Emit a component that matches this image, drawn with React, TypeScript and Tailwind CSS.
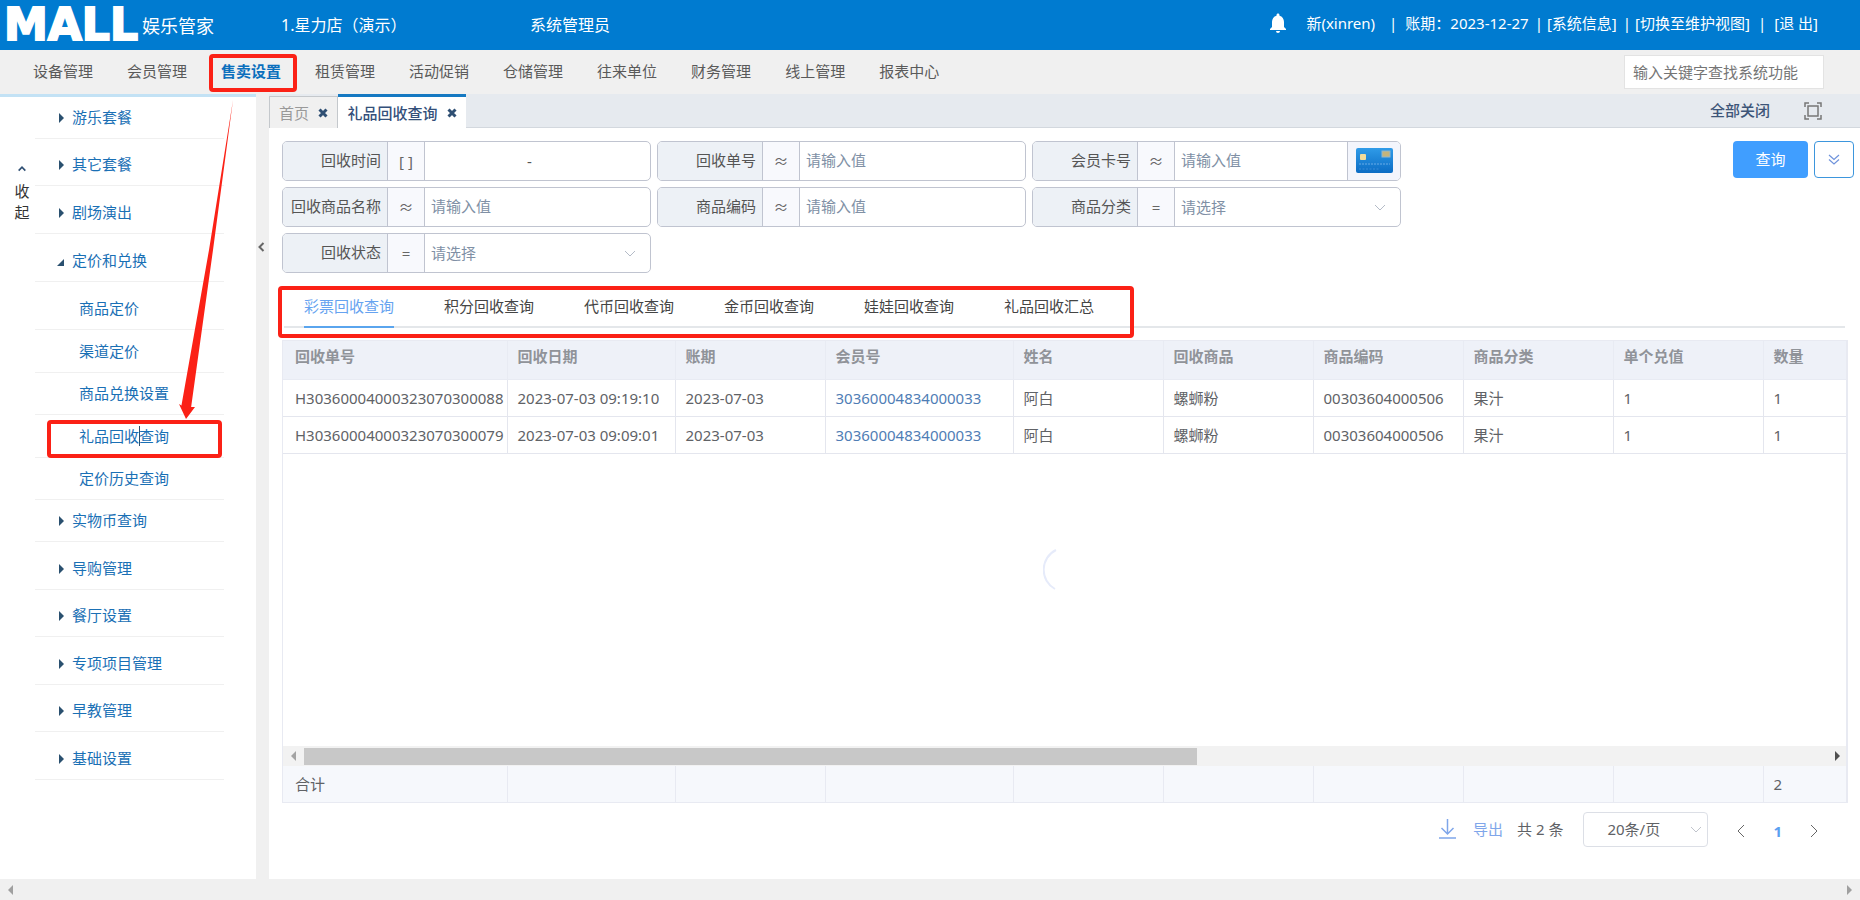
import { useState } from "react";
import type { ReactNode } from "react";
import { MdNotifications } from "react-icons/md";

const topMenus = [
  "设备管理",
  "会员管理",
  "售卖设置",
  "租赁管理",
  "活动促销",
  "仓储管理",
  "往来单位",
  "财务管理",
  "线上管理",
  "报表中心",
];

const upperMenus = ["游乐套餐", "其它套餐", "剧场演出"];
const pricingMenus = ["商品定价", "渠道定价", "商品兑换设置", "礼品回收查询", "定价历史查询"];
const lowerMenus = ["导购管理", "餐厅设置", "专项项目管理", "早教管理", "基础设置"];

const queryTabs = [
  "彩票回收查询",
  "积分回收查询",
  "代币回收查询",
  "金币回收查询",
  "娃娃回收查询",
  "礼品回收汇总",
];

const columns = [
  "回收单号",
  "回收日期",
  "账期",
  "会员号",
  "姓名",
  "回收商品",
  "商品编码",
  "商品分类",
  "单个兑值",
  "数量",
];

const rows = [
  ["H30360004000323070300088", "2023-07-03 09:19:10", "2023-07-03", "30360004834000033", "阿白", "螺蛳粉", "00303604000506", "果汁", "1", "1"],
  ["H30360004000323070300079", "2023-07-03 09:09:01", "2023-07-03", "30360004834000033", "阿白", "螺蛳粉", "00303604000506", "果汁", "1", "1"],
];

// Header, body and summary tables share the same column widths
function TableCols() {
  return (
    <colgroup>
      <col className="w-[224px]" />
      <col className="w-[168px]" />
      <col className="w-[150px]" />
      <col className="w-[188px]" />
      <col className="w-[150px]" />
      <col className="w-[150px]" />
      <col className="w-[150px]" />
      <col className="w-[150px]" />
      <col className="w-[150px]" />
      <col />
    </colgroup>
  );
}

function Triangle({ className, d = "M0 0 L5 5 L0 10 Z" }: { className: string; d?: string }) {
  return (
    <svg viewBox="0 0 5 10" className={`w-[5px] h-[10px] ${className}`} fill="currentColor">
      <path d={d} />
    </svg>
  );
}

function Chevron({ className, d = "M1 1 L6 6 L11 1" }: { className: string; d?: string }) {
  return (
    <svg viewBox="0 0 12 7" className={`w-3 h-[7px] ${className}`} fill="none" stroke="currentColor">
      <path d={d} />
    </svg>
  );
}

function CloseIcon() {
  return (
    <svg viewBox="0 0 10 10" className="w-[10px] h-[10px] text-[#2f4f73]" stroke="currentColor" strokeWidth="3">
      <path d="M1.5 1.5 L8.5 8.5 M8.5 1.5 L1.5 8.5" />
    </svg>
  );
}

function CardIcon() {
  return (
    <svg viewBox="0 0 37 25" className="w-[37px] h-[25px]">
      <defs>
        <linearGradient id="card" x1="0" y1="0" x2="0" y2="1">
          <stop offset="0" stopColor="#2f9be8" />
          <stop offset="1" stopColor="#0b6cc4" />
        </linearGradient>
      </defs>
      <rect width="37" height="25" rx="2" fill="url(#card)" />
      <rect x="4" y="6" width="6" height="6" rx="1" fill="#f3dc9a" />
      <rect x="26" y="3" width="8" height="6" fill="#c4b47c" stroke="#8fb7d0" />
      <path d="M3 16 H34" stroke="#4d9ce0" strokeWidth="1.5" strokeDasharray="2 1" />
      <path d="M3 21 H24" stroke="#3a8dd8" strokeDasharray="2 1.5" />
    </svg>
  );
}

function Filter({ id, label, op, children }: { id: string; label: string; op: string; children: ReactNode }) {
  return (
    <div className="flex h-10 border border-[#c0c4d0] rounded-[5px] overflow-hidden bg-white">
      <label htmlFor={id} className="w-[105px] shrink-0 pr-[6px] pb-[2px] flex items-center justify-end bg-[#edf1f6] border-r border-[#c0c4d0] text-[#555] whitespace-nowrap">
        {label}
      </label>
      <span className="w-[37px] shrink-0 flex items-center justify-center bg-[#f8f9fd] border-r border-[#c0c4d0] text-[#666]">
        {op}
      </span>
      {children}
    </div>
  );
}

const inputClass = "flex-1 min-w-0 px-[6px] pb-[2px] outline-none placeholder:text-[#8090a5]";

function FilterSelect({ id }: { id: string }) {
  return (
    <div className="relative flex-1 flex">
      <select id={id} className="flex-1 appearance-none pl-[6px] pb-px text-[#8090a5] outline-none">
        <option>请选择</option>
      </select>
      <Chevron className="absolute right-[14px] top-4 text-[#b4bbc7] pointer-events-none" />
    </div>
  );
}

function SideItem({ label, open = false, className }: { label: string; open?: boolean; className: string }) {
  return (
    <li className={`flex items-end border-b border-[#f0f0f0] ${className}`}>
      <a href="#" className="flex items-center gap-2 pl-6 pb-[11px] leading-5 text-[#1a70b5]">
        {open ? (
          <svg viewBox="0 0 7 7" className="w-[7px] h-[7px] -ml-[2px] mt-1 text-[#2a506f]" fill="currentColor">
            <path d="M7 0 V7 H0 Z" />
          </svg>
        ) : (
          <Triangle className="text-[#2a506f] mt-[2px]" />
        )}
        {label}
      </a>
    </li>
  );
}

function Sidebar() {
  return (
    <aside className="relative w-64 shrink-0 flex border-t-3 border-[#c3e2f5] bg-white">
      <button className="w-[35px] pl-[9px] pt-[68px] self-start flex flex-col items-center leading-[21px] text-[#333]">
        <Chevron className="text-[#2f4f73] stroke-2 w-[10px] mb-[9px]" d="M2 6 L6 2 L10 6" />
        <span>收</span>
        <span>起</span>
      </button>
      <ul className="w-[189px]">
        {upperMenus.map((label) => (
          <SideItem key={label} label={label} className={label === "游乐套餐" ? "h-[42px]" : "h-12 even:h-[47px]"} />
        ))}
        <SideItem label="定价和兑换" open className="h-12" />
        <li>
          <ul>
            {pricingMenus.map((label) => (
              <li
                key={label}
                className={`flex items-end border-b border-[#f0f0f0] ${label === "商品定价" ? "h-12" : "h-[42px] even:h-[43px]"}`}
              >
                <a href="#" className="relative ml-11 mb-[11px] leading-5 text-[#1a70b5]">
                  {label}
                  {label === "礼品回收查询" && (
                    <>
                      <i className="absolute left-[60px] top-0 h-5 w-px bg-[#2a506f]" />
                      <i className="absolute -left-8 -top-[6px] w-[175px] h-[38px] border-4 border-[#fb2116] rounded" />
                    </>
                  )}
                </a>
              </li>
            ))}
          </ul>
        </li>
        <SideItem label="实物币查询" className="h-[42px]" />
        {lowerMenus.map((label) => (
          <SideItem key={label} label={label} className="odd:h-12 even:h-[47px]" />
        ))}
      </ul>
      {/* guide arrow from the top menu down to the sub menu */}
      <svg viewBox="0 0 60 320" className="absolute left-[178px] top-[3px] w-[60px] h-[320px] pointer-events-none" fill="#fb2116">
        <path d="M55 0 L35 150 L13 308 L3 308 L31 150 Z" />
        <path d="M1 304 L6 307 L17 307 L8 319 Z" />
      </svg>
    </aside>
  );
}

function Header() {
  return (
    <header className="h-[50px] shrink-0 flex items-center bg-[#007bd0] text-white">
      <span className="w-[142px] shrink-0 pl-1 font-['DejaVu_Sans',sans-serif] font-bold text-[44px] leading-[50px] [-webkit-text-stroke:2px_white]">MALL</span>
      <span className="w-[139px] shrink-0 text-lg leading-6 pt-[2px]">娱乐管家</span>
      <span className="w-[249px] shrink-0 text-base">1.星力店（演示）</span>
      <span className="flex-1 text-base">系统管理员</span>
      <div className="flex items-center pr-[42px] pb-1 whitespace-nowrap">
        <MdNotifications className="size-6 mr-4" />
        <span>新(xinren)</span>
        <span className="ml-[14px] mr-2">|</span>
        <span>账期：2023-12-27</span>
        <span className="ml-[6px] mr-1">|</span>
        <a href="#">[系统信息]</a>
        <span className="ml-[6px] mr-1">|</span>
        <a href="#">[切换至维护视图]</a>
        <span className="ml-2 mr-2">|</span>
        <a href="#">[退 出]</a>
      </div>
    </header>
  );
}

export default function App() {
  const [activeTab, setActiveTab] = useState(queryTabs[0]);

  return (
    <div className="min-h-screen flex flex-col bg-white text-[15px] leading-5 text-[#606266] font-['Noto_Sans','Noto_Sans_CJK_SC',sans-serif]">
      <Header />
      <nav className="h-11 shrink-0 flex items-center bg-[#f0f0f0] pl-[33px] pr-9">
        <div className="flex-1 flex gap-[34px] pb-[2px]">
          {topMenus.map((label) =>
            label === "售卖设置" ? (
              <a key={label} href="#" className="relative font-bold text-[#0b6fbd]">
                {label}
                <i className="absolute -left-3 -top-[7px] w-[88px] h-[38px] border-4 border-[#fb2116] rounded" />
              </a>
            ) : (
              <a key={label} href="#" className="text-[#5a5a5a]">{label}</a>
            )
          )}
        </div>
        <input
          aria-label="输入关键字查找系统功能"
          placeholder="输入关键字查找系统功能"
          className="w-[200px] h-[34px] px-2 bg-white border border-[#e3e3e3] outline-none placeholder:text-[#757575]"
        />
      </nav>

      <div className="flex-1 flex">
        <Sidebar />
        <div className="w-[13px] shrink-0 bg-[#f0f0f0] pt-[148px]">
          <button aria-label="收起侧栏" className="block ml-[2px]">
            <svg viewBox="0 0 7 10" className="w-[7px] h-[10px]" fill="none" stroke="#666" strokeWidth="2">
              <path d="M5.5 1 L1.5 5 L5.5 9" />
            </svg>
          </button>
        </div>

        <main className="flex-1 min-w-0 flex flex-col">
          <div className="h-[34px] shrink-0 flex items-end bg-[#e6eaef] border-b border-[#d3d8de]">
            <button className="h-8 w-[69px] -mb-px flex items-center justify-center gap-[9px] bg-[#f0f0f0] border border-b-0 border-[#c4c8cc] text-[#999]">
              首页 <CloseIcon />
            </button>
            <button className="h-[34px] w-32 -mb-px flex items-center justify-center gap-[9px] bg-white border-t-3 border-[#1579c2] text-[#34507a] font-medium">
              礼品回收查询 <CloseIcon />
            </button>
            <div className="flex-1" />
            <button className="self-center mr-[34px] pb-[2px] font-medium text-[#3d5578]">全部关闭</button>
            <button aria-label="全屏" className="self-center mr-[38px]">
              <svg viewBox="0 0 18 18" className="size-[18px]" fill="none" stroke="#777" strokeWidth="1.5">
                <path d="M1 5 V1 H5 M13 1 H17 V5 M17 13 V17 H13 M5 17 H1 V13" />
                <rect x="4" y="4" width="10" height="10" />
              </svg>
            </button>
          </div>

          <div className="flex justify-between items-start pl-[13px] pr-[6px] pt-[13px]">
            <div className="flex-1 max-w-[1119px] grid grid-cols-3 gap-[6px]">
              <Filter id="time" label="回收时间" op="[ ]">
                <input id="time" className="flex-1 min-w-0 outline-none" />
                <span className="self-center text-[#555]">-</span>
                <input aria-label="结束时间" className="flex-1 min-w-0 outline-none mr-4" />
              </Filter>
              <Filter id="order" label="回收单号" op="≈">
                <input id="order" placeholder="请输入值" className={inputClass} />
              </Filter>
              <Filter id="card-no" label="会员卡号" op="≈">
                <input id="card-no" placeholder="请输入值" className={inputClass} />
                <button aria-label="读卡" className="w-[53px] pb-[2px] flex items-center justify-center bg-[#f3f5fc] border-l border-[#c0c4d0]">
                  <CardIcon />
                </button>
              </Filter>
              <Filter id="goods" label="回收商品名称" op="≈">
                <input id="goods" placeholder="请输入值" className={inputClass} />
              </Filter>
              <Filter id="code" label="商品编码" op="≈">
                <input id="code" placeholder="请输入值" className={inputClass} />
              </Filter>
              <Filter id="category" label="商品分类" op="=">
                <FilterSelect id="category" />
              </Filter>
              <Filter id="status" label="回收状态" op="=">
                <FilterSelect id="status" />
              </Filter>
            </div>
            <div className="flex gap-[6px]">
              <button className="w-[75px] h-[37px] pb-[2px] rounded bg-[#409eff] text-white">查询</button>
              <button aria-label="展开" className="w-10 h-[37px] flex items-center justify-center rounded border border-[#3d96dd] bg-white">
                <svg viewBox="0 0 12 11" className="w-3 h-[11px]" fill="none" stroke="#6f93dc" strokeWidth="1.2">
                  <path d="M1 1 L6 5.5 L11 1 M1 5.5 L6 10 L11 5.5" />
                </svg>
              </button>
            </div>
          </div>

          <div className="relative ml-[15px] mr-[15px] mt-[22px] h-[33px] pl-5 flex gap-[50px] border-b-2 border-[#e4e7ea]">
            {queryTabs.map((label) => (
              <button
                key={label}
                onClick={() => setActiveTab(label)}
                className={`h-[33px] pb-[9px] border-b-2 ${
                  activeTab === label ? "border-[#5aa5ee] text-[#66a3f0]" : "border-transparent text-[#444]"
                }`}
              >
                {label}
              </button>
            ))}
            <i className="absolute -left-[6px] -top-[9px] w-[856px] h-[52px] border-4 border-[#fb2116] rounded pointer-events-none" />
          </div>

          <div className="flex-1 flex flex-col ml-[13px] mr-3 mt-3 border border-r-2 border-[#e8eaf2]">
            <table className="w-full table-fixed border-collapse">
              <TableCols />
              <thead>
                <tr className="h-[38px] bg-[#eef1f8]">
                  {columns.map((name) => (
                    <th key={name} className="pl-[10px] first:pl-3 pb-[7px] text-left font-bold text-[#909399] border-r border-b border-[#e8ebf3] last:border-r-0">
                      {name}
                    </th>
                  ))}
                </tr>
              </thead>
              <tbody>
                {rows.map((row) => (
                  <tr key={row[0]} className="h-[37px]">
                    {row.map((value, i) => (
                      <td key={i} className="pl-[10px] first:pl-3 overflow-hidden whitespace-nowrap border-r border-b border-[#e4e6ee] last:border-r-0">
                        {i === 3 ? <a href="#" className="text-[#4f7db5]">{value}</a> : value}
                      </td>
                    ))}
                  </tr>
                ))}
              </tbody>
            </table>

            <div className="flex-1 flex items-center justify-center pb-[60px]">
              <svg viewBox="0 0 44 44" className="size-11" fill="none" stroke="#e6ebfa" strokeWidth="2">
                <path d="M13 2 A22 22 0 0 0 12 41" />
              </svg>
            </div>

            <div className="h-5 shrink-0 flex items-center bg-[#f2f2f2] pl-2 pr-[6px]">
              <Triangle className="text-[#a3a3a3] mr-2" d="M5 0 L0 5 L5 10 Z" />
              <div className="flex-1">
                <div className="w-7/12 h-[17px] bg-[#c8c8c8]" />
              </div>
              <Triangle className="text-[#505050]" />
            </div>

            <table className="w-full table-fixed border-collapse">
              <TableCols />
              <tbody>
                <tr className="h-9 bg-[#f6f8fc]">
                  {columns.map((name, i) => (
                    <td key={name} className="pl-[10px] first:pl-3 border-r border-[#e8eaf2] last:border-r-0">
                      {i === 0 ? "合计" : i === 9 ? "2" : ""}
                    </td>
                  ))}
                </tr>
              </tbody>
            </table>
          </div>

          <div className="h-[76px] shrink-0 pt-2 pr-[42px] flex justify-end items-start">
            <div className="h-9 flex items-center">
              <button className="flex items-center gap-[17px] text-[#7fa6ea]">
                <svg viewBox="0 0 17 20" className="w-[17px] h-5" fill="none" stroke="currentColor" strokeWidth="1.5">
                  <path d="M8.5 0 V15 M2.5 9 L8.5 15 L14.5 9 M0 19 H17" />
                </svg>
                导出
              </button>
              <span className="ml-[14px] mr-5">共 2 条</span>
              <div className="relative">
                <select aria-label="每页条数" className="w-[125px] h-[35px] pl-[23px] appearance-none rounded border border-[#dcdfe6] bg-white outline-none">
                  <option>20条/页</option>
                </select>
                <Chevron className="absolute right-[6px] top-[14px] text-[#c0c4cc] pointer-events-none" />
              </div>
              <button aria-label="上一页" className="ml-[29px]">
                <svg viewBox="0 0 8 14" className="w-2 h-[14px] mt-1" fill="none" stroke="#666">
                  <path d="M7 1 L1 7 L7 13" />
                </svg>
              </button>
              <button className="mx-[28px] mt-1 font-bold text-[#5b9ff0]">1</button>
              <button aria-label="下一页">
                <svg viewBox="0 0 8 14" className="w-2 h-[14px] mt-1" fill="none" stroke="#666">
                  <path d="M1 1 L7 7 L1 13" />
                </svg>
              </button>
            </div>
          </div>
        </main>
      </div>

      <div className="h-[21px] shrink-0 flex items-center justify-between bg-[#f0f0f0] px-2 text-[#a0a0a0]">
        <Triangle className="" d="M5 0 L0 5 L5 10 Z" />
        <Triangle className="" />
      </div>
    </div>
  );
}
